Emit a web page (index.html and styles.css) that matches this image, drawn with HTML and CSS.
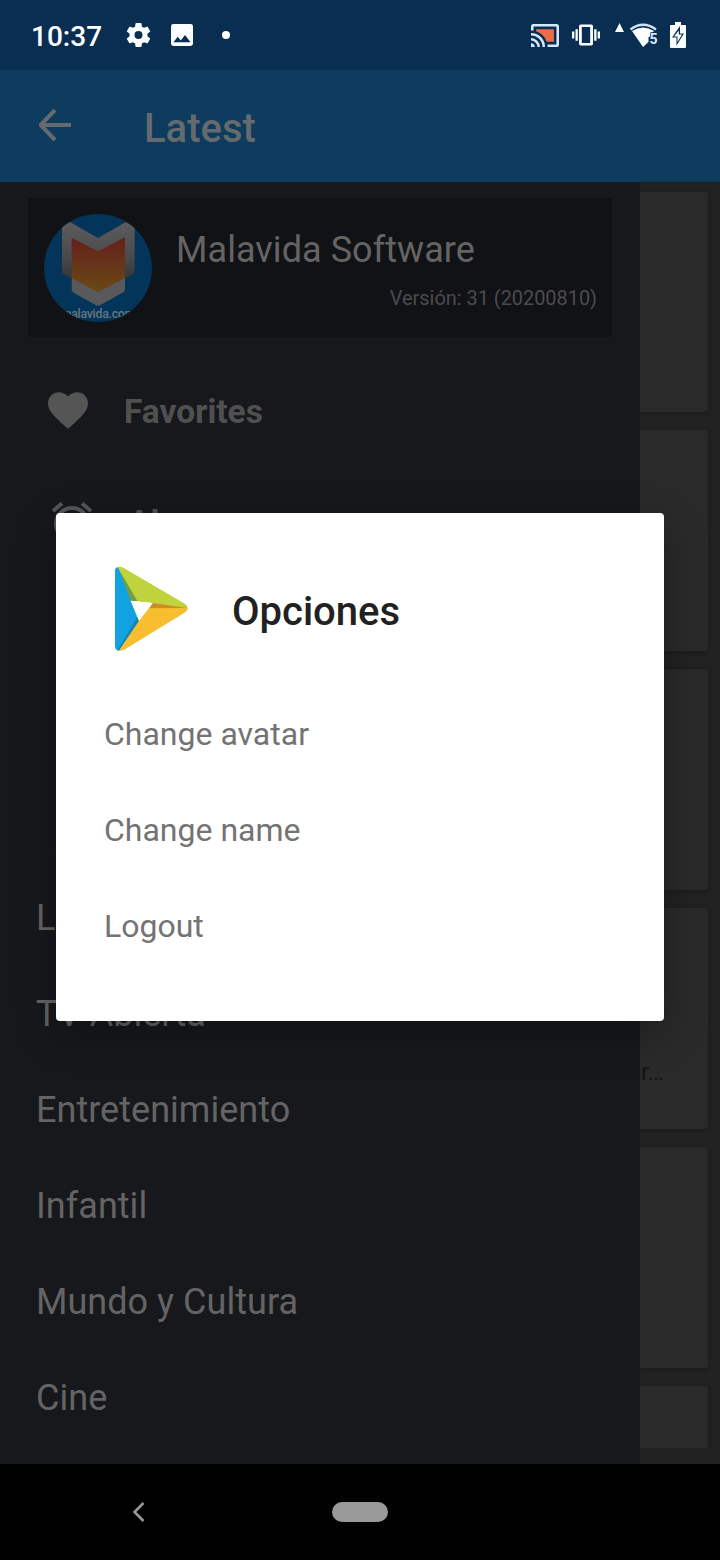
FILE: index.html
```html
<!DOCTYPE html>
<html lang="en">
<head>
<meta charset="utf-8">
<title>Latest</title>
<link rel="stylesheet" href="styles.css">
</head>
<body>
<div class="screen">
  <header class="status">
    <span class="clock">10:37</span>
    <svg class="gear" viewBox="2 2 20 20"><path fill-rule="evenodd" d="M19.14 12.94c.04-.3.06-.61.06-.94s-.02-.64-.07-.94l2.03-1.58a.49.49 0 0 0 .12-.61l-1.92-3.32a.49.49 0 0 0-.59-.22l-2.39.96c-.5-.38-1.03-.7-1.62-.94l-.36-2.54a.48.48 0 0 0-.48-.41h-3.84c-.24 0-.43.17-.47.41l-.36 2.54c-.59.24-1.13.57-1.62.94l-2.39-.96a.48.48 0 0 0-.59.22L2.74 8.87c-.12.21-.08.47.12.61l2.03 1.58c-.05.3-.09.63-.09.94s.02.64.07.94l-2.03 1.58a.49.49 0 0 0-.12.61l1.92 3.32c.12.22.37.29.59.22l2.39-.96c.5.38 1.03.7 1.62.94l.36 2.54c.05.24.24.41.48.41h3.84c.24 0 .44-.17.47-.41l.36-2.54c.59-.24 1.13-.56 1.62-.94l2.39.96c.22.08.47 0 .59-.22l1.92-3.32a.48.48 0 0 0-.12-.61zM12 15.200A3.200 3.200 0 1 1 12 8.800a3.200 3.200 0 0 1 0 6.400z"/></svg>
    <svg class="photo" viewBox="3 3 18 18"><path d="M21 19V5a2 2 0 0 0-2-2H5a2 2 0 0 0-2 2v14a2 2 0 0 0 2 2h14a2 2 0 0 0 2-2zM8.500 13.500l2.500 3.010L14.500 12l4.500 6H5z"/></svg>
    <i class="dot"></i>
    <svg class="cast" viewBox="1 3 22 18"><path class="cast-fill" d="M5 7v1.630c3.960 1.280 7.090 4.410 8.370 8.370H19V7z"/><path d="M1 18v3h3a3 3 0 0 0-3-3zm0-4v2a5 5 0 0 1 5 5h2a7 7 0 0 0-7-7zm0-4v2a9 9 0 0 1 9 9h2A11 11 0 0 0 1 10zM21 3H3a2 2 0 0 0-2 2v3h2V5h18v14h-7v2h7a2 2 0 0 0 2-2V5a2 2 0 0 0-2-2z"/></svg>
    <svg class="vibrate" viewBox="0 3 24 18"><path d="M0 15h2V9H0zm3 2h2V7H3zm19-8v6h2V9zm-3 8h2V7h-2zM16.500 3h-9A1.500 1.500 0 0 0 6 4.500v15A1.500 1.500 0 0 0 7.500 21h9a1.500 1.500 0 0 0 1.500-1.500v-15A1.500 1.500 0 0 0 16.500 3zM15.600 18.800H8.400V5.200h7.200z"/></svg>
    <svg class="wifi" viewBox="0 0 43 26"><path d="M0 10L4.500 1 9 10zM17 9Q28 2 39 9L35.500 13 34.500 15 33.500 15V20L28 25z"/><path class="wifi-arc" d="M15.500 7.500Q28-2 41 7.500"/><text x="34.500" y="22">5</text></svg>
    <svg class="battery" viewBox="0 0 16 26"><path fill-rule="evenodd" d="M5 0h6v3h4q1 0 1 1v21q0 1-1 1H1q-1 0-1-1V4q0-1 1-1h4zM10 4L2 15.500H6.500V23.500L14 11.500H10z"/><path d="M8.800 8.500L4 14.500H7.500V20L12 12.500H8.800z"/></svg>
  </header>

  <div class="appbar">
    <svg class="back" viewBox="0 0 32 32"><path d="M32 16H2M16 1L1.500 16 16 31"/></svg>
    <h1>Latest</h1>
  </div>

  <main class="content">
    <nav class="drawer">
      <section class="profile">
        <svg class="avatar" viewBox="72 72 324 324">
          <defs>
            <clipPath id="round"><circle cx="234" cy="234" r="162"/></clipPath>
            <linearGradient id="flame" x1="0" y1="0" x2="0" y2="1"><stop offset="0" stop-color="#632019"/><stop offset=".5" stop-color="#67351a"/><stop offset="1" stop-color="#694913"/></linearGradient>
            <linearGradient id="silver" x1="0" y1="0" x2="0" y2="1"><stop offset="0" stop-color="#5b5b5d"/><stop offset=".6" stop-color="#4c4b4c"/><stop offset="1" stop-color="#353638"/></linearGradient>
          </defs>
          <g clip-path="url(#round)">
            <rect x="72" y="72" width="324" height="324" fill="#03345a"/>
            <path fill="url(#silver)" d="M126 108L150 96 234 144 318 96 344 110V244Q344 250 338 253L315 265H155L131 253Q126 250 126 244z"/>
            <path fill="#59595b" d="M155 262L234 305 315 262V300Q315 304 310 307L240 346Q234 349 228 346L161 308Q155 304 155 299z"/>
            <path fill="url(#flame)" d="M155 143L234 184 315 142V264L234 306 155 265z"/>
            <text class="avatar-text" x="234" y="383" text-anchor="middle" textLength="224">malavida.com</text>
          </g>
        </svg>
        <div class="who"><div class="name">Malavida Software</div><div class="version">Versión: 31 (20200810)</div></div>
      </section>
      <div class="shortcuts">
        <div class="shortcut">
          <svg class="heart" viewBox="2 3 20 18.350"><path d="M12 21.350l-1.450-1.320C5.400 15.360 2 12.280 2 8.500 2 5.420 4.420 3 7.500 3c1.740 0 3.410.81 4.500 2.090C13.090 3.810 14.760 3 16.500 3 19.580 3 22 5.420 22 8.500c0 3.780-3.400 6.860-8.550 11.540z"/></svg>
          <span>Favorites</span>
        </div>
        <div class="shortcut second">
          <svg class="alarm" viewBox="0 0 40 42"><path d="M1 9L10 1.500M30 1.500L39 9"/><circle cx="20" cy="22" r="16"/></svg>
          <span>Al</span>
        </div>
      </div>
      <ul class="categories">
        <li>L</li><li>TV Abierta</li><li>Entretenimiento</li><li>Infantil</li><li>Mundo y Cultura</li><li>Cine</li>
      </ul>
    </nav>
    <div class="channels">
      <div class="card first"></div><div class="card"></div><div class="card"></div><div class="card labelled">r…</div><div class="card"></div><div class="card"></div>
    </div>
  </main>

  <footer class="navbar">
    <svg class="nav-back" viewBox="0 0 12 20"><path d="M10.500 1L1.500 10l9 9"/></svg>
    <i class="pill"></i>
  </footer>

  <div class="dialog" role="dialog">
    <div class="dialog-head">
      <svg class="logo" viewBox="75 48 222 258">
        <path fill="#bfd33c" d="M82 52Q91 48 101 54L286 162Q294 168 293 177L188 159 122 153z"/>
        <path fill="#6f9e45" d="M84 54L142 153 122 153 88 75z"/>
        <path fill="#f7bf30" d="M293 174Q294 181 286 187L105 298Q94 305 84 301L147 212 188 159z"/>
        <path fill="#c88f25" d="M188 159L293 174 179 175z"/>
        <path fill="#12a2e2" d="M75 62Q75 53 84 52L123 153 147 212 86 302Q75 300 75 287z"/>
        <path fill="#16789d" d="M142 200L147 212 86 302 83 301z" opacity=".7"/>
        <path fill="#fff" d="M122 152L188 159 147 212z"/>
      </svg>
      <h2>Opciones</h2>
    </div>
    <div class="option">Change avatar</div>
    <div class="option">Change name</div>
    <div class="option">Logout</div>
  </div>
</div>
</body>
</html>
```
FILE: styles.css
```css
* { box-sizing: border-box; }
body { margin: 0; background: #000; font-family: Roboto, "Noto Sans", sans-serif; }
h1, h2, ul { margin: 0; padding: 0; list-style: none; }
svg { display: block; flex: none; }
.screen { position: relative; width: 720px; height: 1560px; overflow: hidden; display: flex; flex-direction: column; }

.status { height: 70px; flex: none; display: flex; align-items: center; padding-left: 31px; background: #092e52; color: #fff; fill: #fbffff; }
.clock { width: 95px; font-size: 28px; font-weight: 500; line-height: 34px; padding-top: 3px; white-space: nowrap; }
.gear { width: 25px; height: 26px; }
.photo { width: 22px; height: 22px; margin-left: 20px; }
.dot { width: 8px; height: 8px; border-radius: 50%; background: #fff; margin-left: 29px; }
.cast { width: 28px; height: 23px; margin-left: 301px; fill: #d5e8ff; }
.cast-fill { fill: #ef6c48; }
.vibrate { width: 28px; height: 22px; margin-left: 13px; }
.wifi { width: 43px; height: 26px; margin-left: 15px; }
.wifi-arc { fill: none; stroke: #cfe2f5; stroke-width: 2.4; }
.wifi text { font-size: 14px; font-weight: 700; fill: #d5e8ff; stroke: #092e52; stroke-width: 1.500px; paint-order: stroke; }
.battery { width: 16px; height: 26px; margin-left: 12px; }

.appbar { height: 112px; flex: none; display: flex; align-items: center; padding-left: 39px; background: #0d3c5f; color: #656a6e; }
.back { width: 32px; height: 32px; margin-top: -2px; fill: none; stroke: #656a6e; stroke-width: 4; }
.appbar h1 { font-size: 40px; font-weight: 500; line-height: 48px; margin: 6px 0 0 73px; }

.content { height: 1282px; flex: none; display: flex; background: #222; }
.drawer { width: 640px; height: 1282px; padding-top: 16px; background: #17181c; color: #646464; }
.profile { display: flex; width: 584px; height: 139px; margin-left: 28px; padding: 16px 15px 16px 16px; background: #111215; }
.avatar { width: 108px; height: 108px; }
.avatar-text { font-size: 37px; font-weight: 500; fill: #66747e; }
.who { flex: 1; padding-left: 24px; }
.name { font-size: 36px; line-height: 42px; letter-spacing: .06px; margin-top: 15px; white-space: nowrap; }
.version { font-size: 19.900px; line-height: 24px; margin-top: 16px; text-align: right; color: #4b4b4d; }
.shortcuts { height: 514px; margin: 0 0 0 48px; color: #505051; border-bottom: 1px solid #1b1c20; }
.shortcut { display: flex; height: 112px; padding-top: 53px; font-size: 33.500px; font-weight: 700; line-height: 44px; }
.heart { width: 40px; height: 37px; margin: 2px 36px 0 0; fill: #555; }
.second { padding: 53px 0 0 4px; line-height: 42px; }
.alarm { width: 40px; height: 42px; margin-right: 36px; fill: none; stroke: #555; stroke-width: 4; }
.categories { padding: 19px 0 0 36px; font-size: 36px; letter-spacing: .03px; }
.categories li { height: 96px; line-height: 96px; }

.channels { width: 80px; padding-top: 10px; height: 1266px; overflow: hidden; display: flex; flex-direction: column; gap: 18px; }
.card { width: 68px; height: 221px; flex: none; background: #2a2a2a; border-radius: 0 4px 4px 0; box-shadow: 0 1px 4px #1a1a1a; }
.first { height: 220px; }
.labelled { padding: 150px 0 0 1px; font-size: 24px; line-height: 28px; color: #151515; }

.navbar { height: 96px; flex: none; display: flex; align-items: center; background: #000; padding-left: 133px; }
.nav-back { width: 12px; height: 20px; fill: none; stroke: #999; stroke-width: 2.500; }
.pill { width: 56px; height: 20px; margin-left: 187px; border-radius: 10px; background: #999; }

.dialog { position: absolute; left: 56px; top: 513px; width: 608px; height: 508px; padding: 53px 48px 0; border-radius: 4px; background: #fff; box-shadow: 0 12px 40px rgba(0,0,0,.3); color: #737373; }
.dialog-head { display: flex; height: 120px; padding-left: 11px; }
.logo { width: 74px; height: 86px; }
.dialog h2 { margin: 22px 0 0 43px; font-size: 40px; font-weight: 500; line-height: 48px; color: #212121; }
.option { height: 96px; font-size: 32px; line-height: 96px; }
```
